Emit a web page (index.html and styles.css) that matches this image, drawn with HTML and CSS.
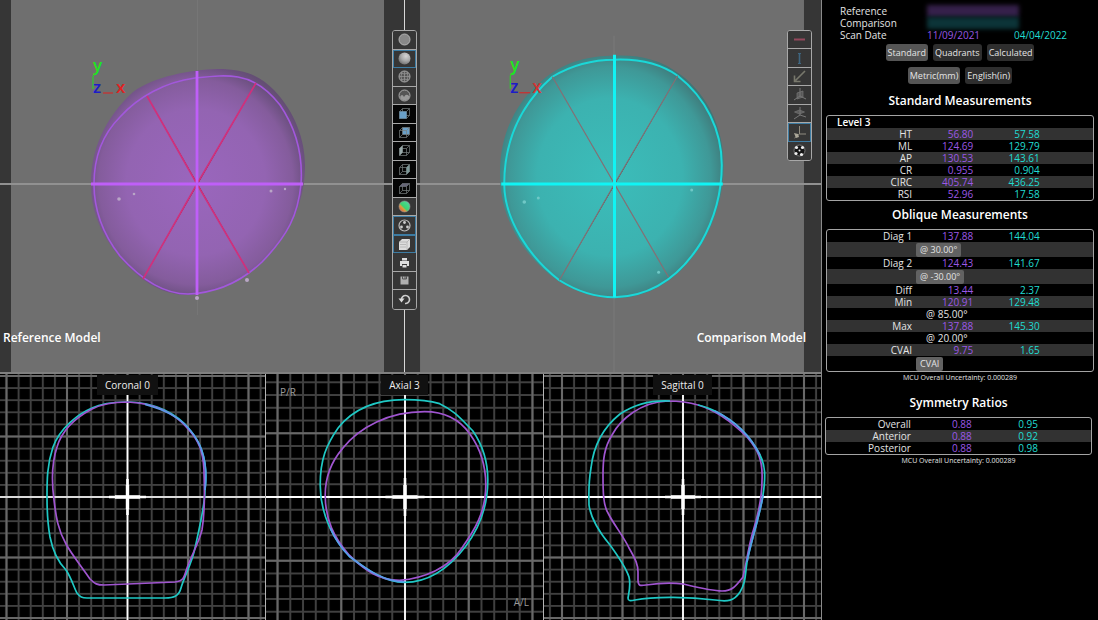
FILE: index.html
```html
<!DOCTYPE html>
<html lang="en">
<head>
<meta charset="utf-8">
<title>Scan Comparison</title>
<link rel="stylesheet" href="styles.css">
</head>
<body>
<svg class="defs" aria-hidden="true">
  <defs>
    <pattern id="minor" x="127.5" y="497" width="12.1" height="12.1" patternUnits="userSpaceOnUse"><path class="line-minor" d="M0 0H12.1M0 12.1H12.1M0 0V12.1M12.1 0V12.1"/></pattern>
    <pattern id="major" x="127.5" y="497" width="60.5" height="60.5" patternUnits="userSpaceOnUse"><path class="line-major" d="M0 0H60.5M0 60.5H60.5M0 0V60.5M60.5 0V60.5"/></pattern>
    <pattern id="minor-ax" x="405.5" y="497" width="12.7" height="12.7" patternUnits="userSpaceOnUse"><path class="line-minor" d="M0 0H12.7M0 12.7H12.7M0 0V12.7M12.7 0V12.7"/></pattern>
    <pattern id="major-ax" x="405.5" y="497" width="63.5" height="63.5" patternUnits="userSpaceOnUse"><path class="line-major" d="M0 0H63.5M0 63.5H63.5M0 0V63.5M63.5 0V63.5"/></pattern>
    <pattern id="minor-sa" x="683" y="497" width="12.1" height="12.1" patternUnits="userSpaceOnUse"><path class="line-minor" d="M0 0H12.1M0 12.1H12.1M0 0V12.1M12.1 0V12.1"/></pattern>
    <pattern id="major-sa" x="683" y="497" width="60.5" height="60.5" patternUnits="userSpaceOnUse"><path class="line-major" d="M0 0H60.5M0 60.5H60.5M0 0V60.5M60.5 0V60.5"/></pattern>
    <radialGradient id="violet" cx=".49" cy=".5" r=".54"><stop offset="0" stop-color="#9a66bd"/><stop offset=".6" stop-color="#9364b2"/><stop offset=".84" stop-color="#845c9c"/><stop offset=".95" stop-color="#6c5080"/><stop offset="1" stop-color="#644e74"/></radialGradient>
    <radialGradient id="teal" cx=".49" cy=".5" r=".54"><stop offset="0" stop-color="#3bbdba"/><stop offset=".6" stop-color="#3cb2b0"/><stop offset=".84" stop-color="#3f9897"/><stop offset=".95" stop-color="#3f7e7e"/><stop offset="1" stop-color="#426c6c"/></radialGradient>
    <linearGradient id="rainbow" x1="0" y1="1" x2="1" y2="0"><stop offset=".1" stop-color="#e05a3a"/><stop offset=".35" stop-color="#d8a040"/><stop offset=".45" stop-color="#3fd070"/><stop offset=".75" stop-color="#46d88c"/><stop offset="1" stop-color="#8a9ac8"/></linearGradient>
    <radialGradient id="ball" cx=".62" cy=".3" r=".8"><stop offset="0" stop-color="#d4d4d4"/><stop offset=".5" stop-color="#a8a8a8"/><stop offset="1" stop-color="#666"/></radialGradient>
    <g id="cube"><path d="M2.500 5.500h7v7h-7zM5.500 2.500h7v7h-7zM2.500 5.500l3-3M9.500 5.500l3-3M9.500 12.500l3-3M2.500 12.500l3-3" fill="none" stroke="#788080" stroke-width=".7"/></g>
  </defs>
</svg>
<div class="app">
  <main class="viewer">
    <section class="models">
      <div class="model">
        <svg class="scene" viewBox="0 0 404 372" preserveAspectRatio="xMidYMid slice">
          <rect width="404" height="372" fill="#363636"/>
          <rect x="11" width="373" height="372" fill="#6f6f6f"/>
          <path d="M197.500 0V315" stroke="#767676"/>
          <path d="M0 184H404" stroke="#919191" stroke-width="2"/>
          <path d="M91 184C91 150 104 119 133 92C155 76 190 70 218 69C242 69 258 74 274 90C295 112 305 140 305 165C305 200 292 232 264 260C245 280 215 295 185 295C160 294 140 280 122 260C100 235 91 210 91 184Z" fill="url(#violet)"/>
          <path d="M94 184C94 158 102 135 120 117C138 97 165 82 195 78C215 76 225 75 238 77C256 80 270 92 280 105C297 130 303 155 301 184C298 215 288 235 262 262C240 283 215 293 188 294C160 294 137 275 120 256C102 233 94 208 94 184Z" fill="none" stroke="#a258dc" stroke-width="1.600"/>
          <g stroke="#d0307c" stroke-width="1.700"><path d="M147 96L197 184L249 273"/><path d="M256 83L197 184L143 279"/></g>
          <path d="M91 184H303M197 71V295" stroke="#bf5ff8" stroke-width="2.800"/>
          <g fill="#b9a6c6"><circle cx="119" cy="199" r="1.800"/><circle cx="134" cy="194" r="1.300"/><circle cx="271" cy="191" r="1.500"/><circle cx="285" cy="189" r="1.200"/><circle cx="247" cy="280" r="2"/><circle cx="197" cy="298" r="2"/></g>
          <path d="M93 89V76l4-4" stroke="#20e020" fill="none"/><path d="M103 93H113" stroke="#e02020"/>
          <g class="axis"><text x="93" y="71" fill="#20e620">y</text><text x="93" y="93" fill="#1c1cc8">z</text><text x="116" y="93" fill="#e02222">x</text></g>
        </svg>
        <h2 class="model-name">Reference Model</h2>
        <div class="toolbar tools-main">
          <button aria-label="Flat shading"><svg viewBox="0 0 15 15"><circle cx="7.500" cy="7.500" r="5.500" fill="#888" stroke="#b4b4b4"/></svg></button>
          <button class="on" aria-label="Smooth shading"><svg viewBox="0 0 15 15"><circle cx="7.500" cy="7.500" r="6" fill="url(#ball)"/></svg></button>
          <button aria-label="Wireframe"><svg viewBox="0 0 15 15"><circle cx="7.500" cy="7.500" r="5.500" fill="#555" stroke="#aaa"/><path d="M2 7.500H13M7.500 2V13M4 4q3.500 2 7 0M4 11q3.500-2 7 0M5 3q-2 4.500 0 9M10 3q2 4.500 0 9" fill="none" stroke="#999" stroke-width=".7"/></svg></button>
          <button aria-label="Points"><svg viewBox="0 0 15 15"><circle cx="7.500" cy="7.500" r="5.500" fill="#555" stroke="#aaa"/><path d="M3 9q2-4 4 0q2-4 5-1v3l-4 1.500-4-1z" fill="#999"/></svg></button>
          <button class="dark" aria-label="Front view"><svg viewBox="0 0 15 15"><use href="#cube"/><path d="M2.500 5.500h7v7h-7z" fill="#6aa0c8"/></svg></button>
          <button class="dark" aria-label="Back view"><svg viewBox="0 0 15 15"><path d="M5.500 2.500h7v7h-7z" fill="#6aa0c8"/><use href="#cube"/></svg></button>
          <button class="dark" aria-label="Left view"><svg viewBox="0 0 15 15"><use href="#cube"/><path d="M2.500 5.500l3-3v7l-3 3z" fill="#9aa"/></svg></button>
          <button class="dark" aria-label="Right view"><svg viewBox="0 0 15 15"><use href="#cube"/><path d="M9.500 5.500l3-3v7l-3 3z" fill="#7d9898"/></svg></button>
          <button class="dark" aria-label="Top view"><svg viewBox="0 0 15 15"><use href="#cube"/><path d="M2.500 5.500l3-3h7l-3 3z" fill="#667"/></svg></button>
          <button aria-label="Color map"><svg viewBox="0 0 15 15"><circle cx="7.500" cy="7.500" r="5.500" fill="url(#rainbow)" stroke="#999" stroke-width=".6"/></svg></button>
          <button class="on" aria-label="Landmarks"><svg viewBox="0 0 15 15"><circle cx="7.500" cy="7.500" r="5.500" fill="none" stroke="#bbb" stroke-width="1.200"/><g fill="#ccc"><circle cx="7.500" cy="4.500" r="1.400"/><circle cx="4.500" cy="9" r="1.400"/><circle cx="10.500" cy="9" r="1.400"/></g></svg></button>
          <button class="on" aria-label="Layers"><svg viewBox="0 0 15 15"><path d="M5 2h8v8l-3 3H2V5z" fill="#ddd"/><path d="M2 5h8v8M10 5l3-3M3 7.500h6M3 10h6" fill="none" stroke="#aaa" stroke-width=".7"/></svg></button>
          <button aria-label="Print"><svg viewBox="0 0 15 15"><path d="M5 3h5v2.500H5zM3 6h9v5h-2V9H5v2H3zM5.500 10h4v2.500h-4z" fill="#ddd"/></svg></button>
          <button aria-label="Save"><svg viewBox="0 0 15 15"><path d="M3.500 3.500h8v8h-8z" fill="#b0b0b0"/><path d="M5.500 3v3h4V3M8 3v3" fill="none" stroke="#555"/></svg></button>
          <button aria-label="Reset"><svg viewBox="0 0 15 15"><path d="M4.500 7.500A4 4 0 1 1 8 11.500" fill="none" stroke="#ccc" stroke-width="1.600"/><path d="M1.500 6.500h6L4.500 10.500z" fill="#ddd"/></svg></button>
        </div>
      </div>
      <div class="model second">
        <svg class="scene" viewBox="405 0 415 372" preserveAspectRatio="xMidYMid slice">
          <rect x="405" width="416" height="372" fill="#363636"/>
          <rect x="420" width="383" height="372" fill="#6f6f6f"/>
          <path d="M613.500 36V372" stroke="#7b7b7b"/>
          <path d="M405 184H821" stroke="#919191" stroke-width="2"/>
          <path d="M500 180C498 140 512 104 545 78C566 61 590 56 614 56C640 55 660 60 680 75C708 96 723 130 723 165C723 195 714 222 701 244C681 276 652 298 614 298C592 298 575 291 558 281C525 258 501 220 500 180Z" fill="url(#teal)"/>
          <path d="M504 184C504 145 518 107 552 77C572 65 592 60 614 60C640 59 660 64 677 76C705 98 721 130 721 165C721 195 712 222 700 243C680 275 652 296 614 297C592 297 575 290 559 280C530 258 504 220 504 184Z" fill="none" stroke="#1ad8d8" stroke-width="2"/>
          <g stroke="#856f74" stroke-width="1.200"><path d="M552 77L614 184L668 277"/><path d="M677 76L614 184L559 280"/></g>
          <path d="M501 184H722M614 55V297" stroke="#10f4f4" stroke-width="3"/>
          <g fill="#70c8c6"><circle cx="524" cy="202" r="1.800"/><circle cx="538" cy="198" r="1.500"/><circle cx="691" cy="190" r="1.500"/><circle cx="658" cy="272" r="1.500"/></g>
          <path d="M510 89V76l4-4" stroke="#20e020" fill="none"/><path d="M519 93H530" stroke="#e02020"/>
          <g class="axis"><text x="510" y="71" fill="#20e620">y</text><text x="510" y="93" fill="#1c1cc8">z</text><text x="532" y="93" fill="#d03434">x</text></g>
        </svg>
        <h2 class="model-name right">Comparison Model</h2>
        <div class="toolbar tools-measure">
          <button aria-label="Width"><svg viewBox="0 0 15 15"><path d="M2 7.500H13" stroke="#94485c" stroke-width="2"/></svg></button>
          <button aria-label="Height"><svg viewBox="0 0 15 15"><path d="M7.500 2V13" stroke="#3f6680" stroke-width="1.600"/><path d="M6 2.500h3M6 12.500h3" stroke="#3f6680"/></svg></button>
          <button aria-label="Diagonal"><svg viewBox="0 0 15 15"><path d="M13 2L3.500 11.500M2.500 6.500v6h6" fill="none" stroke="#78786c" stroke-width="1.600"/></svg></button>
          <button aria-label="Coronal plane"><svg viewBox="0 0 15 15"><path d="M8 1V9L2 13M8 9l6 3" fill="none" stroke="#777"/><path d="M5 6L11 4v6l-6 2z" fill="#77777788" stroke="#777" stroke-width=".7"/></svg></button>
          <button aria-label="Axial plane"><svg viewBox="0 0 15 15"><path d="M8 1V9L2 13M8 9l6 2" fill="none" stroke="#777"/><path d="M2.500 6l5-2 5 2-5 2z" fill="#77777799" stroke="#777" stroke-width=".7"/></svg></button>
          <button class="on" aria-label="Sagittal plane"><svg viewBox="0 0 15 15"><path d="M7.500 1V9H14M7.500 9l-5 4" fill="none" stroke="#908c80"/><path d="M2 8l4 1 1 3-3 1z" fill="#aaa698"/></svg></button>
          <button aria-label="Rotate"><svg viewBox="0 0 15 15"><circle cx="7.500" cy="7.500" r="5.500" fill="#151515" stroke="#777"/><g fill="#eee"><circle cx="4.500" cy="4.500" r="1.600"/><circle cx="10.500" cy="4.500" r="1.600"/><circle cx="4" cy="10.500" r="1.600"/><circle cx="9.500" cy="11.500" r="1.600"/><circle cx="7.500" cy="7.500" r="1"/></g></svg></button>
        </div>
      </div>
    </section>
    <section class="slices">
      <figure class="slice">
        <svg class="scene" viewBox="0 374 265 246" preserveAspectRatio="xMidYMid slice">
          <rect y="374" width="266" height="246" fill="url(#minor)"/><rect y="374" width="266" height="246" fill="url(#major)"/>
          <path d="M0 497H266M127.500 390V620" stroke="#fff" stroke-width="1.600"/><path d="M109 497H146M127.500 479V515" stroke="#fff" stroke-width="2.600"/><path d="M115 497H140M127.500 485V509" stroke="#fff" stroke-width="3.400"/>
          <g fill="none" stroke-width="1.700"><path stroke="#1fc8c4" d="M127 402C113 402 100 404 92 408C78 414 60 428 53 447C47 465 47 480 47 497C47 510 47 520 50 537C53 552 58 562 66 570C72 579 74 588 77 593C80 597 82 598 87 598L165 598C174 598 179 596 181 588C184 577 192 563 195 548C200 525 205 505 205 490C208 465 203 445 190 430C178 414 155 402 127 402Z"/>
          <path stroke="#a055d0" d="M127 402C113 402 100 405 92 409C75 418 62 430 57 447C51 465 52 485 54 500C56 517 58 530 66 544C72 555 82 567 90 579C95 584 97 585 104 585L175 582C183 581 184 578 186 571C190 558 198 545 202 530C206 505 204 480 204 470C203 450 198 440 189 430C175 413 155 403 127 402"/>
          <path stroke="#5a9ce8" d="M145 404.500C162 409 180 417 190 430C203 445 208 465 205 490"/></g>
        </svg>
        <figcaption>Coronal 0</figcaption>
      </figure>
      <figure class="slice">
        <svg class="scene" viewBox="267 374 276 246" preserveAspectRatio="xMidYMid slice">
          <rect x="266" y="374" width="278" height="246" fill="url(#minor-ax)"/><rect x="266" y="374" width="278" height="246" fill="url(#major-ax)"/>
          <path d="M266 497H544M405.500 390V620" stroke="#fff" stroke-width="1.800"/><path d="M386 497H425M405.500 478V516" stroke="#fff" stroke-width="2.600"/><path d="M393 497H418M405.500 485V509" stroke="#fff" stroke-width="3.400"/>
          <g fill="none" stroke-width="1.700"><path stroke="#1fc8c4" d="M405 400C418 400 430 401 440 404C455 411 462 420 473 431C484 447 488 462 488 480C488 510 478 530 466 546C450 567 430 582 405 582C385 582 368 570 350 556C335 540 321 515 321 485C321 460 327 445 339 428C355 408 378 400 405 400Z"/>
          <path stroke="#a055d0" d="M425 412C445 412 460 420 470 434C480 448 486 465 486 485C486 512 475 530 462 548C450 567 425 578 400 580C380 580 365 570 350 555C335 538 326 520 326 495C326 478 332 462 343 449C360 427 390 412 425 412Z"/>
          <path stroke="#5a9ce8" d="M405 581.500C385 581.500 368 570 350 556C343 549 336 539 331 528"/></g>
        </svg>
        <figcaption>Axial 3</figcaption>
        <span class="corner top">P/R</span><span class="corner bottom">A/L</span>
      </figure>
      <figure class="slice">
        <svg class="scene" viewBox="544 374 277 246" preserveAspectRatio="xMidYMid slice">
          <rect x="543" y="374" width="279" height="246" fill="url(#minor-sa)"/><rect x="543" y="374" width="279" height="246" fill="url(#major-sa)"/>
          <path d="M543 497H822M683 390V620" stroke="#fff" stroke-width="1.800"/><path d="M665 497H701M683 479V515" stroke="#fff" stroke-width="2.600"/><path d="M671 497H695M683 485V509" stroke="#fff" stroke-width="3.400"/>
          <g fill="none" stroke-width="1.700"><path stroke="#a055d0" d="M668 401C640 402 620 420 612 435C604 448 603 460 603 475C603 490 603 505 608 513C614 525 624 537 629 548C636 560 638 565 638 572L638 580C638 586 640 586 646 585C660 583 675 583 683 584C700 588 712 591 722 591C734 591 738 583 743 577C746 565 748 550 752 535C757 518 762 500 762 480C763 460 758 450 747 437C735 425 718 411 698 405C688 402 678 401 668 401"/>
          <path stroke="#1fc8c4" d="M670 401C650 400 632 406 620 414C600 430 593 450 591 468C588 485 589 497 589 505C591 520 600 533 610 545C618 556 626 568 629 577C631 585 629 592 628 598C628 601 630 601 635 600C655 596 690 597 715 600C728 602 734 601 740 592C746 582 745 575 747 562C750 545 760 515 763 495C766 475 765 465 760 455C750 435 735 421 715 411C708 408 704 406 698 405"/>
          <path stroke="#5a9ce8" d="M715 411C735 421 750 435 760 455M763 495C760 515 750 545 747 562"/></g>
        </svg>
        <figcaption>Sagittal 0</figcaption>
      </figure>
    </section>
  </main>
  <aside class="report">
    <dl class="scans">
      <dt>Reference</dt><dd class="redacted ref-bg"></dd>
      <dt>Comparison</dt><dd class="redacted cmp-bg"></dd>
      <dt>Scan Date</dt><dd class="ref">11/09/2021</dd><dd class="cmp">04/04/2022</dd>
    </dl>
    <div class="tabs"><button class="selected">Standard</button><button>Quadrants</button><button>Calculated</button></div>
    <div class="tabs units"><button class="selected">Metric(mm)</button><button>English(in)</button></div>

    <h2 class="first">Standard Measurements</h2>
    <div class="box">
      <table class="odd">
        <colgroup><col class="c-label"><col class="c-ref"><col class="c-cmp"><col></colgroup>
        <thead><tr><th colspan="4" class="level">Level 3</th></tr></thead>
        <tbody>
          <tr><th>HT</th><td class="ref">56.80</td><td class="cmp">57.58</td><td></td></tr>
          <tr><th>ML</th><td class="ref">124.69</td><td class="cmp">129.79</td><td></td></tr>
          <tr><th>AP</th><td class="ref">130.53</td><td class="cmp">143.61</td><td></td></tr>
          <tr><th>CR</th><td class="ref">0.955</td><td class="cmp">0.904</td><td></td></tr>
          <tr><th>CIRC</th><td class="ref">405.74</td><td class="cmp">436.25</td><td></td></tr>
          <tr><th>RSI</th><td class="ref">52.96</td><td class="cmp">17.58</td><td></td></tr>
        </tbody>
      </table>
    </div>

    <h2>Oblique Measurements</h2>
    <div class="box">
      <table class="even">
        <colgroup><col class="c-label"><col class="c-ref"><col class="c-cmp"><col></colgroup>
        <tbody>
          <tr><th>Diag 1</th><td class="ref">137.88</td><td class="cmp">144.04</td><td></td></tr>
          <tr class="action"><th></th><td colspan="3"><button>@ 30.00°</button></td></tr>
          <tr><th>Diag 2</th><td class="ref">124.43</td><td class="cmp">141.67</td><td></td></tr>
          <tr class="action"><th></th><td colspan="3"><button>@ -30.00°</button></td></tr>
          <tr><th>Diff</th><td class="ref">13.44</td><td class="cmp">2.37</td><td></td></tr>
          <tr><th>Min</th><td class="ref">120.91</td><td class="cmp">129.48</td><td></td></tr>
          <tr><th></th><td class="angle" colspan="3">@ 85.00°</td></tr>
          <tr><th>Max</th><td class="ref">137.88</td><td class="cmp">145.30</td><td></td></tr>
          <tr><th></th><td class="angle" colspan="3">@ 20.00°</td></tr>
          <tr><th>CVAI</th><td class="ref">9.75</td><td class="cmp">1.65</td><td></td></tr>
          <tr class="action"><th></th><td colspan="3"><button>CVAI</button></td></tr>
        </tbody>
      </table>
    </div>
    <p class="note">MCU Overall Uncertainty: 0.000289</p>

    <section class="ratios">
      <h2>Symmetry Ratios</h2>
      <div class="box">
        <table class="even">
          <colgroup><col class="c-label"><col class="c-ref"><col class="c-cmp"><col></colgroup>
          <tbody>
            <tr><th>Overall</th><td class="ref">0.88</td><td class="cmp">0.95</td><td></td></tr>
            <tr><th>Anterior</th><td class="ref">0.88</td><td class="cmp">0.92</td><td></td></tr>
            <tr><th>Posterior</th><td class="ref">0.88</td><td class="cmp">0.98</td><td></td></tr>
          </tbody>
        </table>
      </div>
      <p class="note">MCU Overall Uncertainty: 0.000289</p>
    </section>
  </aside>
</div>
</body>
</html>
```

FILE: styles.css
```css
* { box-sizing: border-box; }
body { margin: 0; background: #000; color: #e4e4e4; font: 10px/12px "Open Sans", "Noto Sans", sans-serif; }
button { font: inherit; color: inherit; border: 0; padding: 0; }
h2, p, dl, dd, figure { margin: 0; }
.defs { position: absolute; width: 0; height: 0; }
.line-minor { stroke: #404040; stroke-width: 2; }
.line-major { stroke: #686868; stroke-width: 2; }
.app { display: grid; grid-template-columns: minmax(0, 1fr) 276px; min-height: 100vh; }

.viewer { display: grid; grid-template-rows: 3fr 2fr; border-right: 1px solid #8a8a8a; }
.models { display: grid; grid-template-columns: 404fr 417fr; }
.model, .slice { position: relative; min-width: 0; min-height: 0; }
.second { border-left: 1px solid #d8d8d8; }
.scene { position: absolute; inset: 0; display: block; width: 100%; height: 100%; }
.axis { font-size: 17px; font-weight: 600; }
.model-name { position: absolute; left: 3px; bottom: 26px; font-size: 12px; line-height: 16px; font-weight: 600; color: #fff; }
.model-name.right { left: auto; right: 15px; }

.toolbar { position: absolute; z-index: 1; top: 30px; display: grid; grid-auto-rows: 1fr; width: 25px; border: 1px solid #a8a8a8; border-radius: 3px; background: #363636; overflow: hidden; }
.tools-main { right: -13px; height: 280px; }
.tools-measure { right: 9px; height: 131px; }
.toolbar button { display: flex; align-items: center; justify-content: center; min-height: 0; background: #363636; border-bottom: 1px solid #a8a8a8; }
.toolbar button:last-child { border-bottom: 0; }
.toolbar .dark { background: #050505; }
.toolbar .on { border: 1px solid #3d7ca3; }
.toolbar svg { width: 15px; height: 15px; }

.slices { display: grid; grid-template-columns: 265fr 278fr 278fr; border-top: 2px solid #808080; }
.slice { display: flex; justify-content: center; align-items: flex-start; overflow: hidden; }
.slice + .slice { border-left: 1px solid #b4b4b4; }
figcaption { position: relative; padding: 4px 8px; margin-top: 1px; background: #111; color: #eee; }
.slice:first-child figcaption { margin-right: 10px; }
.corner { position: absolute; color: #999; }
.corner.top { left: 14px; top: 12px; }
.corner.bottom { right: 14px; bottom: 12px; }

.report { padding: 5px 4px; }
.scans { display: grid; grid-template-columns: 87px 87px 1fr; padding-left: 14px; }
.scans dt { grid-column: 1; }
.redacted { width: 92px; filter: blur(2px); }
.ref-bg { background: #35204a; }
.cmp-bg { background: #0c3438; }
.ref { color: #9c58e6; }
.cmp { color: #20dcd2; }

.tabs { display: flex; justify-content: center; gap: 5px; margin-top: 3px; }
.tabs.units { margin-top: 6px; }
.tabs button { height: 17px; padding: 0 2px; border-radius: 3px; background: #2e2e2e; font-size: 9px; }
.tabs .selected { background: #555; }

.report h2 { margin: 5px 0; text-align: center; font-size: 12px; line-height: 18px; font-weight: 600; color: #fff; }
.report h2.first { margin-top: 8px; }
.box { border: 1px solid #a4a4a4; border-radius: 3px; overflow: hidden; }
table { width: 100%; table-layout: fixed; border-collapse: collapse; }
.c-label { width: 32%; }
.c-ref { width: 23%; }
.c-cmp { width: 25%; }
th, td { height: 12px; padding: 0; text-align: right; font-weight: 400; line-height: 12px; }
.level { padding-left: 10px; text-align: left; font-weight: 600; color: #fff; }
.odd tbody tr:nth-child(odd), .even tr:nth-child(even) { background: #323232; }
td[colspan] { padding-left: 4px; text-align: left; }
td.angle { padding-left: 14px; color: #e4e4e4; }
.action td { height: 15px; }
.action button { display: block; height: 14px; padding: 0 4px; border-radius: 2px; background: #626262; font-size: 9px; line-height: 14px; }
.note { text-align: center; font-size: 7px; line-height: 12px; }
.ratios { padding: 10px 2px 0 0; margin-left: -1px; }
.ratios h2 { margin-top: 0; }
```
